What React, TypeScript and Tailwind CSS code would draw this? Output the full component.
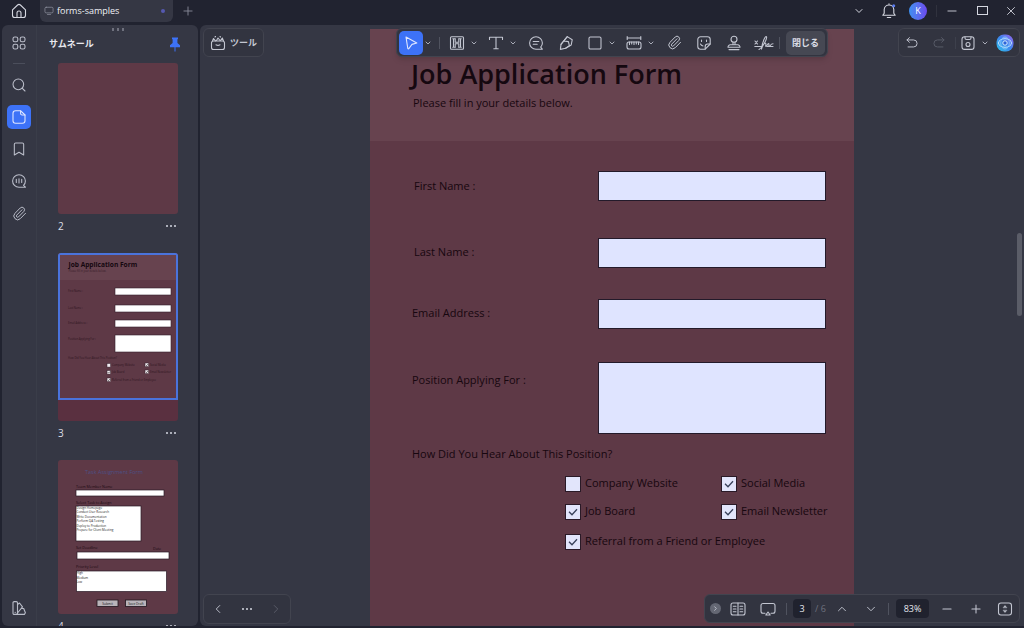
/**
 * PDF editor window
 * Tab bar, thumbnail panel, document canvas and floating toolbars
 */

import React, { useState } from 'react';
import {
  Bookmark,
  ChevronDown,
  ChevronLeft,
  ChevronRight,
  ChevronUp,
  Minus,
  Paperclip,
  Plus,
  Search,
  Square,
  X,
} from 'lucide-react';

interface IconProps {
  size?: number;
  className?: string;
  children: React.ReactNode;
}

const Icon: React.FC<IconProps> = ({ size = 16, className, children }) => (
  <svg
    width={size}
    height={size}
    viewBox="0 0 16 16"
    fill="none"
    stroke="currentColor"
    strokeWidth="1.1"
    strokeLinecap="round"
    strokeLinejoin="round"
    className={className}
    aria-hidden="true"
  >
    {children}
  </svg>
);

const HomeIcon = () => (
  <Icon>
    <path d="M1.5 6.8 6.6 2a2 2 0 0 1 2.8 0l5.1 4.8v5.4a2.3 2.3 0 0 1-2.3 2.3H3.8a2.3 2.3 0 0 1-2.3-2.3z" />
    <path d="M6 14.5V10a2 2 0 0 1 4 0v4.5" />
  </Icon>
);

const GridIcon = () => (
  <Icon>
    <rect x="2" y="2" width="4.8" height="4.8" rx="1.8" />
    <rect x="9.2" y="2" width="4.8" height="4.8" rx="1.8" />
    <rect x="2" y="9.2" width="4.8" height="4.8" rx="1.8" />
    <rect x="9.2" y="9.2" width="4.8" height="4.8" rx="1.8" />
  </Icon>
);

const PageIcon = () => (
  <Icon>
    <path d="M4.5 1.8h5.3L14 6v5.7a2.5 2.5 0 0 1-2.5 2.5h-7A2.5 2.5 0 0 1 2 11.7V4.3a2.5 2.5 0 0 1 2.5-2.5z" />
    <path d="M9.6 2v2.5A1.5 1.5 0 0 0 11.1 6H14" />
  </Icon>
);

const VoiceIcon = () => (
  <Icon>
    <path d="M14.5 14.2H8A6.4 6.2 0 1 1 14.4 8c0 1.7-.7 3.2-1.9 4.4z" />
    <path d="M5.3 6.3v3.2M8 5.8v4.2M10.7 6.3v3.2" />
  </Icon>
);

const PaletteIcon = () => (
  <Icon>
    <rect x="2" y="1.6" width="4.5" height="12.8" rx="1.2" />
    <path d="m6.500 4.500 2-1.500 3 3.800-5 6.200" />
    <path d="M10.5 8.5h2.200l1.700 4.300-1 1.600H5" />
    <path d="M4.200 12.200v.2" />
  </Icon>
);

const ToolboxIcon = () => (
  <Icon>
    <rect x="1.5" y="6" width="13" height="8.5" rx="2" />
    <path d="M6 9.8c1.3.8 2.7.8 4 0M2.5 6l1-2.5 2 2.3M6.500 5.500 8 3l2 2.500M10.5 5.500l1.800-2.500 1.200 3M5 2l.5-.5M10 1.500l.5.5" />
  </Icon>
);

const CursorIcon = () => (
  <Icon>
    <path d="M3 2 13.800 8 9 9.400l-3.200 4.300c-.3.400-.9.300-1-.2z" />
  </Icon>
);

const HighlightIcon = () => (
  <Icon>
    <rect x="1.500" y="1.800" width="13" height="12.400" rx="1" />
    <path d="M4.500 3.800v8.400M6.200 3.800v3.400h3.600V3.800M11.500 3.800v8.400M6.200 12.200V8.800h3.600v3.400M3.800 3.800h2.600M9.600 3.800h2.600M3.800 12.200h2.600M9.600 12.200h2.600" />
  </Icon>
);

const TextIcon = () => (
  <Icon>
    <path d="M1.500 4.500V2.200h13v2.300M8 2.200v11.600M5.800 13.800h4.400" />
  </Icon>
);

const CommentIcon = () => (
  <Icon>
    <path d="M14.300 14.200H8A6.400 6.200 0 1 1 14.400 8c0 1.700-.6 3-1.700 4.200z" />
    <path d="M5.200 6.500h5.600M5.200 9.300h4" />
  </Icon>
);

const PenIcon = () => (
  <Icon>
    <path d="m9.300 1.600 4.900 3.200-1 5.200-5.600 3.200-5.200 1.200.6-5z" />
    <path d="M3 9.400 5.600 6l4.800.6 1 4.200-3.800 2.400M5.600 6l3.700-4.400" />
  </Icon>
);

const RulerIcon = () => (
  <Icon>
    <path d="M1.200 3h13.600M1.200 1.500v3M14.800 1.500v3" />
    <rect x="1" y="7" width="14" height="7" rx="2" />
    <path d="M3.500 7v2.500M5.700 7v2M8 7v2.500M10.300 7v2M12.500 7v2.500" />
  </Icon>
);

const StickerIcon = () => (
  <Icon>
    <path d="M4.500 1.800h7A2.700 2.700 0 0 1 14.200 4.500V9l-5 5.200H4.500a2.700 2.700 0 0 1-2.700-2.700v-7a2.700 2.700 0 0 1 2.700-2.700z" />
    <path d="M9.200 14v-2.500A2.500 2.500 0 0 1 11.700 9h2.400M5.500 5v1.500M10.500 5v1.500M4.500 9c.5 1.200 1.400 1.800 2.500 2" />
  </Icon>
);

const StampIcon = () => (
  <Icon>
    <circle cx="8" cy="4.300" r="3" />
    <path d="M7 7.200v2.600M9 7.200v2.600M2 12.200a2.300 2.300 0 0 1 2.300-2.400h7.400a2.300 2.300 0 0 1 2.300 2.400zM3 14.600h10" />
  </Icon>
);

const SignIcon = () => (
  <svg
    width="20"
    height="16"
    viewBox="0 0 20 16"
    fill="none"
    stroke="currentColor"
    strokeWidth="1.1"
    strokeLinecap="round"
    strokeLinejoin="round"
    aria-hidden="true"
  >
    <path d="m1 6 2.500 3M3.500 6 1 9M.8 11.500h7M13 11.500h6" />
    <path d="M5 14.500C8 13 13.500 4 12.500 1.800c-.8-1.500-4 4-5 12.400 1-3.500 2.700-6.200 4-6 1.200.3-.5 3.300.5 3.300s1.500-3 2.500-3-.2 2.800.8 2.800 1.200-2.500 3.700-2.500" />
  </svg>
);

const PinIcon = () => (
  <svg width="12" height="15" viewBox="0 0 12 15" aria-hidden="true">
    <path d="M3 .5h6v1.300l-.6.6V6l2.600 2.300v2H1v-2L3.600 6V2.400L3 1.800z" fill="#3d72f7" />
    <path d="M6 10v4.500" stroke="#3d72f7" />
  </svg>
);

const BellIcon = () => (
  <Icon>
    <path d="M1.800 12.200h12.400l-1.400-2V6.500A4.800 4.800 0 0 0 8 2a4.800 4.800 0 0 0-4.800 4.500v3.700zM6.300 14.500h3.400M8 .8V2" />
    <circle cx="12.700" cy="2.700" r="1.500" fill="#5b7cf0" stroke="none" />
  </Icon>
);

const UndoIcon = ({ className }: { className?: string }) => (
  <Icon size={14} className={className}>
    <path d="M5 1.800 2.300 4.500 5 7.200M2.300 4.500h7.500a4 4 0 0 1 0 8H3.500" />
  </Icon>
);

const SaveIcon = () => (
  <Icon>
    <rect x="2" y="1.800" width="12" height="12.600" rx="2.500" />
    <path d="M5 2v1a1.500 1.500 0 0 0 1.500 1.500h3A1.500 1.500 0 0 0 11 3V2" />
    <circle cx="8" cy="9.500" r="2" />
  </Icon>
);

const AssistantIcon = () => (
  <svg width="18" height="18" viewBox="0 0 18 18" fill="none" aria-hidden="true">
    <defs>
      <linearGradient id="assistant" x1="0" y1="1" x2="1" y2="0">
        <stop offset="0" stopColor="#2fc3e8" />
        <stop offset=".5" stopColor="#3d86ee" />
        <stop offset="1" stopColor="#9a63ee" />
      </linearGradient>
    </defs>
    <rect x=".5" y=".5" width="17" height="17" rx="7.500" fill="url(#assistant)" />
    <ellipse cx="9" cy="9" rx="6.500" ry="4.300" stroke="#bfe6ff" />
    <ellipse cx="9" cy="9" rx="4.300" ry="6" stroke="#8fd0ff" strokeWidth=".8" />
    <circle cx="9" cy="9" r="2.200" fill="#2c63d8" stroke="#d5efff" />
  </svg>
);

const BookIcon = () => (
  <Icon>
    <rect x="1" y="2" width="14" height="12" rx="2" />
    <path d="M8 2v12M3.300 5.300H6M3.300 8H6M3.300 10.700H6M10 5.300h2.700M10 8h2.700M10 10.700h2.700" />
  </Icon>
);

const PresentIcon = () => (
  <Icon>
    <path d="M5 12.200H3a2 2 0 0 1-2-2V4.500a2 2 0 0 1 2-2h10a2 2 0 0 1 2 2v5.700a2 2 0 0 1-2 2h-2M8 11l2.200 3H5.800z" />
  </Icon>
);

const FitIcon = () => (
  <Icon>
    <rect x="1.500" y="2" width="13" height="12" rx="2.500" />
    <path d="M6.300 6.500 8 4.500l1.700 2zM6.300 9.500 8 11.500l1.700-2z" fill="currentColor" strokeWidth=".5" />
  </Icon>
);

const Dots = () => (
  <span className="flex gap-[2px]">
    <i className="size-[2px] rounded-full bg-[#d5d7e0]" />
    <i className="size-[2px] rounded-full bg-[#d5d7e0]" />
    <i className="size-[2px] rounded-full bg-[#d5d7e0]" />
  </span>
);

const Caret = () => <ChevronDown size={8} strokeWidth={3} className="text-[#a9acb8]" />;

const Divider = () => <span className="h-3 w-px shrink-0 bg-[#50535f]" />;

const TitleBar: React.FC = () => (
  <header className="flex h-[25px] shrink-0 text-[#d5d7e0]">
    <a href="#home" aria-label="Home" className="flex h-[22px] w-10 items-center pl-[11px]">
      <HomeIcon />
    </a>
    <div className="flex h-[22px] w-[133px] items-center rounded-b-md bg-[#353744] px-1">
      <Icon size={10} className="text-[#9497a5]">
        <rect x="1.500" y="2" width="13" height="9" rx="2" />
        <path d="M5.500 13.500h5" />
      </Icon>
      <span className="ml-[3px] flex-1 text-[9px] text-[#f0f1f6]">forms-samples</span>
      <i className="mr-1 size-1 rounded-full bg-[#5559b0]" />
    </div>
    <button aria-label="New tab" className="flex h-[22px] w-[30px] items-center justify-center text-[#8c8f9c]">
      <Plus size={14} strokeWidth={1.5} />
    </button>
    <div className="ml-auto flex h-[21px] items-center">
      <button aria-label="Tabs" className="flex w-[30px] justify-center">
        <ChevronDown size={12} strokeWidth={2} />
      </button>
      <button aria-label="Notifications" className="flex w-[30px] justify-center">
        <BellIcon />
      </button>
      <button
        aria-label="Account K"
        className="mx-[5px] flex size-[18px] items-center justify-center rounded-full bg-linear-to-r from-[#3b8ff0] to-[#6a48ee] text-[9px] text-white"
      >
        K
      </button>
      <span className="ml-1 h-3 w-px bg-[#30323e]" />
      <button aria-label="Minimize" className="flex w-[30px] justify-center">
        <Minus size={14} strokeWidth={1.5} />
      </button>
      <button aria-label="Maximize" className="flex w-[30px] justify-center">
        <svg width="12" height="10" fill="none" stroke="currentColor" aria-hidden="true">
          <rect x="1.500" y=".5" width="10" height="8" />
        </svg>
      </button>
      <button aria-label="Close" className="flex w-[27px] justify-center">
        <X size={14} strokeWidth={1.5} />
      </button>
    </div>
  </header>
);

const RAIL_BUTTON = 'flex size-6 items-center justify-center rounded-[5px]';

const Rail: React.FC = () => (
  <nav className="flex w-[35px] shrink-0 flex-col items-center border-r border-[#3a3d49] pt-[6px] pb-[6px] text-[#b9bcc8]">
    <button aria-label="Apps" className={RAIL_BUTTON}>
      <GridIcon />
    </button>
    <span className="my-2 h-px w-3 bg-[#4b4e5b]" />
    <div className="flex flex-1 flex-col items-center gap-2 pt-px">
      <button aria-label="Search" className={RAIL_BUTTON}>
        <Search size={16} strokeWidth={1.6} />
      </button>
      <button
        aria-label="Thumbnails"
        className="flex size-6 items-center justify-center rounded-[5px] bg-[#3d72f7] text-[#dfe6ff]"
      >
        <PageIcon />
      </button>
      <button aria-label="Bookmarks" className={RAIL_BUTTON}>
        <Bookmark size={16} strokeWidth={1.6} />
      </button>
      <button aria-label="Comments" className={RAIL_BUTTON}>
        <VoiceIcon />
      </button>
      <button aria-label="Attachments" className={RAIL_BUTTON}>
        <Paperclip size={15} strokeWidth={1.6} />
      </button>
    </div>
    <button aria-label="Theme" className={RAIL_BUTTON}>
      <PaletteIcon />
    </button>
  </nav>
);

const THUMB_FIELDS = [
  { y: 35, h: 7 },
  { y: 52, h: 7 },
  { y: 67, h: 7 },
  { y: 82, h: 17 },
];

const THUMB_LABELS = [
  { x: 10, y: 39, text: 'First Name :' },
  { x: 10, y: 56, text: 'Last Name :' },
  { x: 10, y: 71, text: 'Email Address :' },
  { x: 10, y: 87, text: 'Position Applying For :' },
  { x: 10, y: 105.5, text: 'How Did You Hear About This Position?' },
  { x: 54, y: 113, text: 'Company Website' },
  { x: 92, y: 113, text: 'Social Media' },
  { x: 54, y: 120, text: 'Job Board' },
  { x: 92, y: 120, text: 'Email Newsletter' },
  { x: 54, y: 127.5, text: 'Referral from a Friend or Employee' },
];

const THUMB_BOXES = [
  [49, 110.5, false],
  [49, 117.5, true],
  [49, 125, true],
  [87, 110, true],
  [87, 117, true],
] as const;

const ApplicationThumb = () => (
  <svg viewBox="0 0 120 168" className="block w-full" aria-hidden="true">
    <rect width="120" height="168" fill="#5a3040" />
    <rect width="120" height="147" fill="#5e3946" />
    <rect width="120" height="27" fill="#67434f" />
    <text x="10.500" y="13.500" fontSize="6.600" fontWeight="700" fill="#150810">
      Job Application Form
    </text>
    <text x="10.500" y="19" fontSize="2.600" fill="#371d29">
      Please fill in your details below.
    </text>
    {THUMB_LABELS.map(item => (
      <text key={item.text} x={item.x} y={item.y} fontSize="2.700" fill="#2e1521">
        {item.text}
      </text>
    ))}
    {THUMB_FIELDS.map(field => (
      <rect key={field.y} x="57" y={field.y} width="56" height={field.h} fill="#fff" stroke="#33202c" strokeWidth=".6" />
    ))}
    {THUMB_BOXES.map(([x, y, checked]) => (
      <g key={`${x}-${y}`}>
        <rect x={x} y={y} width="3.600" height="3.600" fill="#f3edf2" stroke="#33202c" strokeWidth=".5" />
        {checked && <path d={`M${x + 0.8} ${y + 1.8}l.8.8 1.300-1.500`} fill="none" stroke="#222" strokeWidth=".6" />}
      </g>
    ))}
    <rect x="1" y="1" width="118" height="145" fill="none" stroke="#4a73dc" strokeWidth="2" />
  </svg>
);

const TASKS = [
  'Design Homepage',
  'Conduct User Research',
  'Write Documentation',
  'Perform QA Testing',
  'Deploy to Production',
  'Prepare for Client Meeting',
];

const PRIORITIES = ['High', 'Medium', 'Low'];

const TaskThumb = () => (
  <svg viewBox="0 0 120 154" className="block w-full" aria-hidden="true">
    <rect width="120" height="154" fill="#5e3946" />
    <text x="27" y="13.500" fontSize="5.500" fill="#4d4f85">
      Task Assignment Form
    </text>
    <g fontSize="3.700" fill="#1d0913">
      <text x="18" y="27.500">Team Member Name</text>
      <text x="18" y="44">Select Task to Assign</text>
      <text x="18" y="89">Set Deadline</text>
      <text x="95" y="90">Date</text>
      <text x="18" y="108">Priority Level</text>
    </g>
    <g fill="#fff" stroke="#2a1a25" strokeWidth=".7">
      <rect x="18" y="30" width="88" height="6" />
      <rect x="18" y="46" width="65" height="35" />
      <rect x="19" y="92" width="92" height="7" />
      <rect x="18.500" y="111" width="90" height="20.500" />
    </g>
    <g fontSize="3" fill="#222">
      {TASKS.map((task, i) => (
        <text key={task} x="18.500" y={48.8 + i * 4.5}>
          {task}
        </text>
      ))}
      {PRIORITIES.map((priority, i) => (
        <text key={priority} x="18.500" y={114 + i * 4.5}>
          {priority}
        </text>
      ))}
    </g>
    <g fill="#b9b4ba" stroke="#20151d" strokeWidth=".8">
      <rect x="39" y="140" width="21" height="6.500" />
      <rect x="67.500" y="140" width="21" height="6.500" />
    </g>
    <g fontSize="3.200" fill="#222" textAnchor="middle">
      <text x="49.500" y="144.500">Submit</text>
      <text x="78" y="144.500">Save Draft</text>
    </g>
  </svg>
);

const Thumbnail: React.FC<{ page: number; children: React.ReactNode }> = ({ page, children }) => (
  <li>
    <button aria-label={`Page ${page}`} className="block w-full overflow-hidden rounded-[3px]">
      {children}
    </button>
    <div className="flex h-6 items-center justify-between pr-[2px] text-[10px] text-[#dcdee6]">
      <span>{page}</span>
      <button aria-label={`Page ${page} options`}>
        <Dots />
      </button>
    </div>
  </li>
);

const ThumbnailPanel: React.FC = () => (
  <section className="relative flex min-w-0 flex-1 flex-col overflow-hidden">
    <div className="absolute top-[3px] left-1/2 flex -translate-x-1/2 gap-1">
      <i className="h-[3px] w-px bg-[#a9acb8]" />
      <i className="h-[3px] w-px bg-[#a9acb8]" />
      <i className="h-[3px] w-px bg-[#a9acb8]" />
    </div>
    <div className="flex h-[38px] shrink-0 items-center justify-between pr-[17px] pl-3">
      <h2 className="text-[9px] font-bold text-[#e6e7ee]">サムネール</h2>
      <button aria-label="Pin panel">
        <PinIcon />
      </button>
    </div>
    <ul className="flex min-h-0 flex-1 flex-col gap-[15px] overflow-hidden pr-5 pl-[21px]">
      <Thumbnail page={2}>
        <div className="h-[151px] bg-[#5e3946]" />
      </Thumbnail>
      <Thumbnail page={3}>
        <ApplicationThumb />
      </Thumbnail>
      <Thumbnail page={4}>
        <TaskThumb />
      </Thumbnail>
    </ul>
  </section>
);

const FLOATING = 'absolute flex items-center rounded-md border border-[#42444f] bg-[#323440] text-[#c3c6d1]';

const ToolWithMenu: React.FC<{ label: string; children: React.ReactNode }> = ({ label, children }) => (
  <button aria-label={label} className="flex w-[39px] items-center gap-[5px] pl-[6px]">
    {children}
    <Caret />
  </button>
);

const Tool: React.FC<{ label: string; children: React.ReactNode }> = ({ label, children }) => (
  <button aria-label={label} className="flex w-[30px] items-center justify-center">
    {children}
  </button>
);

const MainToolbar: React.FC = () => (
  <div className="absolute top-[3px] left-1/2 flex h-[29px] -translate-x-1/2 items-center rounded-md border border-[#42444f] bg-[#323440] px-[2px] text-[#c3c6d1] shadow-md">
    <button
      aria-label="Select"
      className="flex size-6 shrink-0 items-center justify-center rounded-[5px] bg-[#3d72f7] text-[#dfe6ff]"
    >
      <CursorIcon />
    </button>
    <button aria-label="Select options" className="mr-[7px] ml-px">
      <Caret />
    </button>
    <Divider />
    <span className="w-[3px]" />
    <ToolWithMenu label="Highlight">
      <HighlightIcon />
    </ToolWithMenu>
    <ToolWithMenu label="Text">
      <TextIcon />
    </ToolWithMenu>
    <Tool label="Comment">
      <CommentIcon />
    </Tool>
    <Tool label="Pen">
      <PenIcon />
    </Tool>
    <ToolWithMenu label="Shape">
      <Square size={16} strokeWidth={1.6} strokeLinejoin="miter" />
    </ToolWithMenu>
    <ToolWithMenu label="Measure">
      <RulerIcon />
    </ToolWithMenu>
    <Tool label="Attach">
      <Paperclip size={15} strokeWidth={1.6} />
    </Tool>
    <Tool label="Sticker">
      <StickerIcon />
    </Tool>
    <Tool label="Stamp">
      <StampIcon />
    </Tool>
    <Tool label="Sign">
      <SignIcon />
    </Tool>
    <Divider />
    <button className="ml-[6px] h-6 w-[39px] shrink-0 rounded-[5px] bg-[#464853] text-[9px] font-bold text-[#dcdee6]">
      閉じる
    </button>
  </div>
);

const ViewBar: React.FC = () => (
  <div className={`${FLOATING} right-1 bottom-[3px] h-[29px] pr-[6px] pl-[5px]`}>
    <button
      aria-label="Collapse"
      className="mr-[9px] flex size-[11px] items-center justify-center rounded-full bg-[#646773]"
    >
      <ChevronRight size={7} strokeWidth={3} />
    </button>
    <button aria-label="Reading view">
      <BookIcon />
    </button>
    <button aria-label="Present" className="mr-[10px] ml-[14px]">
      <PresentIcon />
    </button>
    <Divider />
    <div className="ml-[6px] flex w-[34px] items-center gap-1 text-[9px] whitespace-nowrap text-[#6f727f]">
      <input
        aria-label="Page"
        defaultValue="3"
        className="h-[19px] w-[18px] shrink-0 rounded-[4px] bg-[#20222e] text-center text-[#e6e7ee]"
      />
      <span>/ 6</span>
    </div>
    <button aria-label="Previous page" className="ml-[8px]">
      <ChevronUp size={14} strokeWidth={1.6} />
    </button>
    <button aria-label="Next page" className="mr-[10px] ml-[15px]">
      <ChevronDown size={14} strokeWidth={1.6} />
    </button>
    <Divider />
    <input
      aria-label="Zoom"
      defaultValue="83%"
      className="mr-[11px] ml-[7px] h-[19px] w-[33px] rounded-[4px] bg-[#20222e] text-center text-[9px] font-medium text-[#e6e7ee]"
    />
    <button aria-label="Zoom out">
      <Minus size={14} strokeWidth={1.8} />
    </button>
    <button aria-label="Zoom in" className="mr-[14px] ml-[15px]">
      <Plus size={14} strokeWidth={1.8} />
    </button>
    <button aria-label="Fit page">
      <FitIcon />
    </button>
  </div>
);

const FIELD = 'w-[228px] border border-[#231a2a] bg-[#dfe4ff] px-1 text-[11px] text-[#1c0c16]';

const CheckOption: React.FC<{ label: string; initial?: boolean }> = ({ label, initial = false }) => {
  const [checked, setChecked] = useState(initial);

  return (
    <label className="flex h-[15px] items-center gap-1 whitespace-nowrap">
      <span className="relative flex">
        <input
          type="checkbox"
          checked={checked}
          onChange={e => setChecked(e.target.checked)}
          className="size-4 appearance-none border border-[#2a1a27] bg-[#e2e5fb]"
        />
        {checked && (
          <svg
            viewBox="0 0 16 16"
            fill="none"
            stroke="#38405a"
            strokeWidth="1.3"
            className="pointer-events-none absolute inset-0 size-4"
            aria-hidden="true"
          >
            <path d="m4 7.800 3 3 5-5.500" />
          </svg>
        )}
      </span>
      {label}
    </label>
  );
};

const DocumentPage: React.FC = () => (
  <article className="mx-auto h-full w-[484px] bg-[#5e3946] text-[11px] text-[#17070f]">
    <div className="h-[112px] bg-[#67434f] pt-[25px] pl-[41px]">
      <h1 className="text-[27px] leading-10 font-semibold whitespace-nowrap text-[#150810]">Job Application Form</h1>
      <p className="pl-[2px] leading-[18px]">Please fill in your details below.</p>
    </div>
    <form className="pt-[30px] pl-[42px]">
      <div className="grid grid-cols-[186px_1fr]">
        <label htmlFor="first" className="h-[67px] pl-[2px] leading-[30px]">
          First Name :
        </label>
        <input id="first" className={`${FIELD} h-[30px]`} />
        <label htmlFor="last" className="h-[61px] pl-[2px] leading-[27px]">
          Last Name :
        </label>
        <input id="last" className={`${FIELD} h-[30px]`} />
        <label htmlFor="email" className="h-[63px] leading-[27px]">
          Email Address :
        </label>
        <input id="email" type="email" className={`${FIELD} h-[30px]`} />
        <label htmlFor="position" className="h-[72px] leading-[36px]">
          Position Applying For :
        </label>
        <textarea id="position" className={`${FIELD} h-[72px] resize-none`} />
      </div>
      <fieldset>
        <legend className="pt-[11px] leading-[18px]">How Did You Hear About This Position?</legend>
        <div className="grid grid-cols-[156px_1fr] gap-y-[13px] pt-[13px] pl-[153px]">
          <CheckOption label="Company Website" />
          <CheckOption label="Social Media" initial />
          <CheckOption label="Job Board" initial />
          <CheckOption label="Email Newsletter" initial />
          <div className="col-span-2 pt-[2px]">
            <CheckOption label="Referral from a Friend or Employee" initial />
          </div>
        </div>
      </fieldset>
    </form>
  </article>
);

export default function App() {
  return (
    <div className="flex h-screen flex-col overflow-hidden bg-[#212330] pb-[2px] font-['Open_Sans','Noto_Sans_CJK_JP',sans-serif]">
      <TitleBar />
      <div className="flex min-h-0 flex-1 gap-[2px] pl-[2px]">
        <aside className="flex w-[196px] shrink-0 overflow-hidden rounded-md bg-[#353744]">
          <Rail />
          <ThumbnailPanel />
        </aside>
        <main className="relative min-w-0 flex-1 overflow-hidden rounded-l-md bg-[#353744] pt-1">
          <DocumentPage />
          <button className={`${FLOATING} top-[3px] left-[3px] h-[29px] gap-1 px-[6px] text-[9px] font-bold`}>
            <ToolboxIcon />
            ツール
          </button>
          <MainToolbar />
          <div className={`${FLOATING} top-[3px] right-1 h-[29px] pr-[5px] pl-[6px]`}>
            <button aria-label="Undo">
              <UndoIcon />
            </button>
            <button aria-label="Redo" className="mr-[9px] ml-[13px]">
              <UndoIcon className="-scale-x-100 text-[#5a5d69]" />
            </button>
            <span className="h-3 w-px bg-[#3d404c]" />
            <button aria-label="Save" className="ml-1">
              <SaveIcon />
            </button>
            <button aria-label="Save options" className="mr-[7px] ml-[5px]">
              <Caret />
            </button>
            <button aria-label="Assistant">
              <AssistantIcon />
            </button>
          </div>
          <div className={`${FLOATING} bottom-[2px] left-[3px] h-[30px] w-[88px] justify-between px-[7px]`}>
            <button aria-label="Back">
              <ChevronLeft size={14} strokeWidth={1.6} />
            </button>
            <button aria-label="History">
              <Dots />
            </button>
            <button aria-label="Forward" className="text-[#5a5d69]">
              <ChevronRight size={14} strokeWidth={1.6} />
            </button>
          </div>
          <ViewBar />
          <div className="absolute top-[208px] right-[2px] h-[83px] w-[5px] rounded-full bg-[#5b5d68]" />
        </main>
      </div>
    </div>
  );
}
